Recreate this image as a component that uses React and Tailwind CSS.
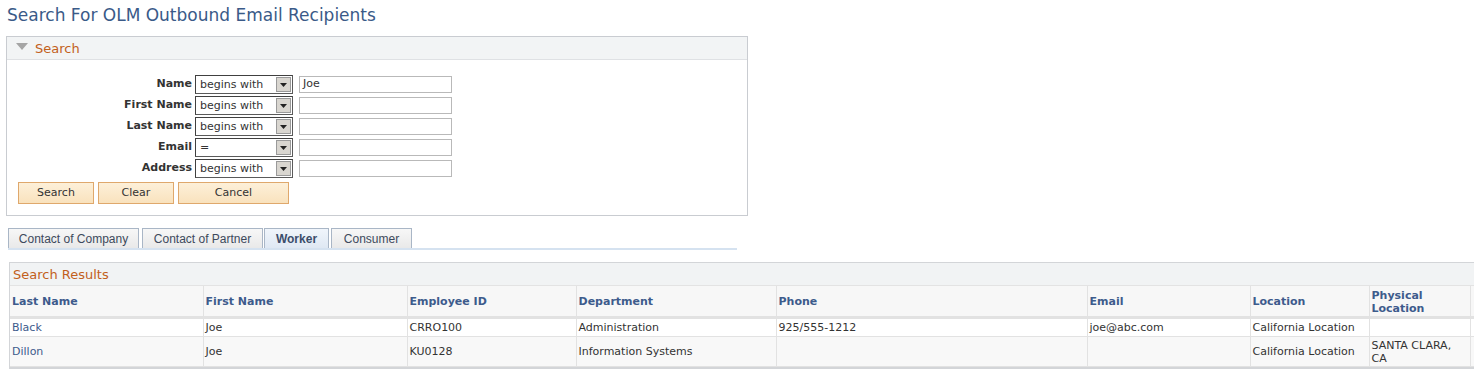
import React from "react";

const V = { fontFamily: '"DejaVu Sans", Verdana, sans-serif' };
const A = { fontFamily: '"Liberation Sans", Arial, sans-serif' };

function Select({ value }) {
  return (
    <div className="relative flex h-[19px] w-[98px] items-center border border-[#5a5a5a] border-t-[#404040] border-l-[#404040] bg-white">
      <span className="pl-[4px] text-[11px] leading-none text-[#333]" style={V}>{value}</span>
      <div className="absolute right-[1px] top-[1px] flex h-[15px] w-[15px] items-center justify-center border border-[#9a9a9a] bg-[#d9d6d0]">
        <svg width="7" height="4" viewBox="0 0 7 4"><path d="M0 0h7L3.5 4z" fill="#222" /></svg>
      </div>
    </div>
  );
}

function Row({ label, op, val }) {
  return (
    <div className="flex h-[21px] items-start">
      <div className="w-[188px] pr-[3px] pt-[1px] text-right text-[11px] font-bold leading-[15px] text-[#333]" style={V}>{label}</div>
      <Select value={op} />
      <div className="ml-[6px] mt-[1px] flex h-[17px] w-[153px] items-center border border-[#b9b9b9] bg-white pl-[3px] text-[11px] text-[#333]" style={V}>{val}</div>
    </div>
  );
}

function Btn({ w, children }) {
  return (
    <div className={`flex h-[22px] ${w} items-center justify-center border border-[#dfa86c] bg-gradient-to-b from-[#fdf0d9] to-[#f9e2bd] text-[11px] text-[#333]`} style={V}>{children}</div>
  );
}

function Tab({ children, active, w }) {
  return (
    <div className={`flex h-[20px] ${w} items-center justify-center border border-b-0 border-[#a9b6c6] text-[12px] ${active ? "bg-gradient-to-b from-[#f0f5fb] to-[#dfe8f3] font-bold text-[#3b4d6b]" : "bg-gradient-to-b from-[#f7f7f7] to-[#e9e9e9] text-[#3d4a5c]"}`} style={A}>{children}</div>
  );
}

const cols = [
  { h: "Last Name", w: 193 },
  { h: "First Name", w: 204 },
  { h: "Employee ID", w: 169 },
  { h: "Department", w: 200 },
  { h: "Phone", w: 311 },
  { h: "Email", w: 163 },
  { h: "Location", w: 119 },
  { h: "Physical Location", w: 101 },
  { h: "", w: 60 },
];

const rows = [
  ["Black", "Joe", "CRRO100", "Administration", "925/555-1212", "joe@abc.com", "California Location", "", ""],
  ["Dillon", "Joe", "KU0128", "Information Systems", "", "", "California Location", "SANTA CLARA, CA", ""],
];

export default function App() {
  return (
    <div className="h-[375px] w-[1474px] overflow-hidden bg-white" style={V}>
      <div className="pl-[7px] pt-[5px] text-[17px] leading-[21px] text-[#3a5a88]">Search For OLM Outbound Email Recipients</div>

      <div className="ml-[6px] mt-[10px] w-[742px] border border-[#c9ccd1]">
        <div className="flex h-[23px] items-center border-b border-[#dfe1e4] bg-[#f2f4f5] pl-[9px]">
          <svg width="12" height="7" viewBox="0 0 12 7" className="mb-[4px]"><path d="M0 0h12L6 7z" fill="#a5a5a5" /></svg>
          <span className="ml-[7px] pt-[2px] text-[13px] text-[#c2601c]">Search</span>
        </div>
        <div className="pt-[15px] pb-[11px]">
          <Row label="Name" op="begins with" val="Joe" />
          <Row label="First Name" op="begins with" val="" />
          <Row label="Last Name" op="begins with" val="" />
          <Row label="Email" op="=" val="" />
          <Row label="Address" op="begins with" val="" />
          <div className="ml-[11px] mt-[2px] flex gap-[4px]">
            <Btn w="w-[76px]">Search</Btn>
            <Btn w="w-[76px]">Clear</Btn>
            <Btn w="w-[111px]">Cancel</Btn>
          </div>
        </div>
      </div>

      <div className="ml-[8px] mt-[12px] w-[729px]">
        <div className="flex items-end">
          <Tab w="w-[131px]">Contact of Company</Tab>
          <div className="ml-[3px]"><Tab w="w-[121px]">Contact of Partner</Tab></div>
          <div className="ml-[1px]"><Tab w="w-[65px]" active>Worker</Tab></div>
          <div className="ml-[2px]"><Tab w="w-[81px]">Consumer</Tab></div>
        </div>
        <div className="h-[2px] bg-[#d5e2f0]" />
      </div>

      <div className="ml-[9px] mt-[12px] w-[1530px] border border-r-0 border-b-2 border-[#d3d5d8]">
        <div className="flex h-[23px] items-center border-b border-[#e3e3e3] bg-[#f1f3f4] pl-[3px] pt-[1px] text-[13px] text-[#c2601c]">Search Results</div>
        <table className="border-collapse text-[11px]" style={{ tableLayout: "fixed" }}>
          <colgroup>
            {cols.map((c, i) => <col key={i} style={{ width: c.w }} />)}
          </colgroup>
          <thead>
            <tr className="h-[31px] bg-[#f7f7f7]">
              {cols.map((c, i) => (
                <th key={i} className="border-r border-b-[3px] border-[#e2e2e2] px-[2px] pt-[2px] text-left align-middle font-bold leading-[13px] text-[#3d5b8c]">{c.h}</th>
              ))}
            </tr>
          </thead>
          <tbody>
            {rows.map((r, ri) => (
              <tr key={ri} className={ri === 0 ? "h-[19px] bg-white" : "h-[30px] bg-[#f8f8f8]"}>
                {r.map((v, ci) => (
                  <td key={ci} className={`border-r border-b border-[#e2e2e2] px-[2px] pt-[1px] align-middle leading-[13px] ${ci === 0 ? "text-[#3d5b8c]" : "text-[#333]"}`}>{v}</td>
                ))}
              </tr>
            ))}
          </tbody>
        </table>
      </div>
    </div>
  );
}
